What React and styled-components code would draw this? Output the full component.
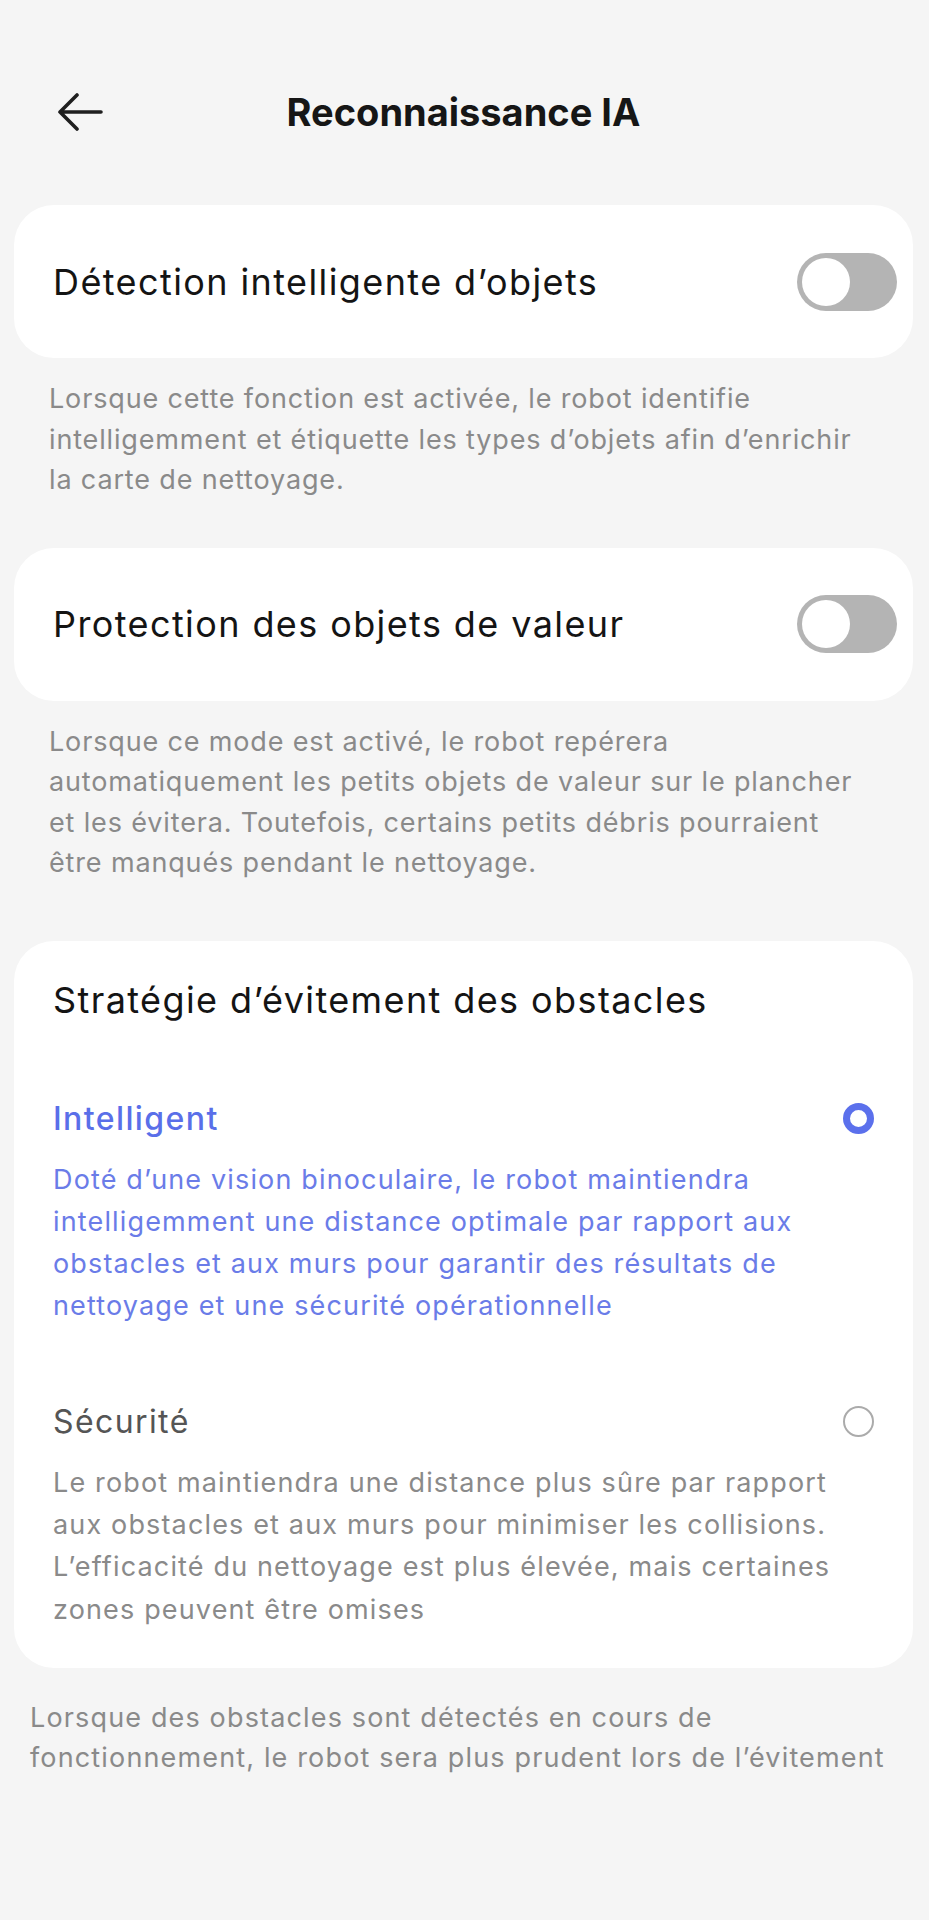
import styled, { createGlobalStyle } from "styled-components";

const GlobalStyle = createGlobalStyle`
  * { box-sizing: border-box; }
  body {
    margin: 0;
    background: #f5f5f5;
    font-family: "Inter", "Noto Sans", sans-serif;
  }
`;

function BackArrow() {
  return (
    <svg width="48" height="38" viewBox="0 0 48 38" fill="none">
      <path
        d="M4 19 H45 M21 2 L4 19 L21 36"
        stroke="#1f1f1f"
        strokeWidth="3.6"
        strokeLinecap="round"
        strokeLinejoin="round"
      />
    </svg>
  );
}

export default function App() {
  return (
    <Page>
      <GlobalStyle />
      <Header>
        <BackButton>
          <BackArrow />
        </BackButton>
        <Title>Reconnaissance IA</Title>
      </Header>

      <SwitchCard>
        <CardLabel>Détection intelligente d’objets</CardLabel>
        <Toggle />
      </SwitchCard>
      <Note>
        Lorsque cette fonction est activée, le robot identifie intelligemment et
        étiquette les types d’objets afin d’enrichir la carte de nettoyage.
      </Note>

      <SwitchCard>
        <CardLabel>Protection des objets de valeur</CardLabel>
        <Toggle />
      </SwitchCard>
      <Note $bottom={57}>
        Lorsque ce mode est activé, le robot repérera automatiquement les petits
        objets de valeur sur le plancher et les évitera. Toutefois, certains
        petits débris pourraient être manqués pendant le nettoyage.
      </Note>

      <StrategyCard>
        <CardLabel>Stratégie d’évitement des obstacles</CardLabel>
        <Option $first>
          <OptionRow>
            <OptionName $active>Intelligent</OptionName>
            <Radio $checked />
          </OptionRow>
          <OptionText $active>
            Doté d’une vision binoculaire, le robot maintiendra intelligemment
            une distance optimale par rapport aux obstacles et aux murs pour
            garantir des résultats de nettoyage et une sécurité opérationnelle
          </OptionText>
        </Option>
        <Option>
          <OptionRow>
            <OptionName>Sécurité</OptionName>
            <Radio />
          </OptionRow>
          <OptionText>
            Le robot maintiendra une distance plus sûre par rapport aux obstacles
            et aux murs pour minimiser les collisions. L’efficacité du nettoyage
            est plus élevée, mais certaines zones peuvent être omises
          </OptionText>
        </Option>
      </StrategyCard>

      <Footer>
        Lorsque des obstacles sont détectés en cours de fonctionnement, le robot
        sera plus prudent lors de l’évitement
      </Footer>
    </Page>
  );
}

const Page = styled.div`
  width: 929px;
  min-height: 1920px;
  padding: 80px 16px 0 14px;
  background: #f5f5f5;
`;

const Header = styled.div`
  position: relative;
  height: 64px;
  display: flex;
  align-items: center;
  justify-content: center;
  margin-bottom: 61px;
`;

const BackButton = styled.div`
  position: absolute;
  left: 42px;
  top: 13px;
  display: flex;
`;

const Title = styled.h1`
  margin: 0;
  font-size: 38px;
  font-weight: 700;
  color: #161616;
  letter-spacing: 0;
`;

const SwitchCard = styled.div`
  height: 153px;
  background: #fff;
  border-radius: 40px;
  display: flex;
  align-items: center;
  justify-content: space-between;
  padding: 0 16px 0 39px;
`;

const CardLabel = styled.div`
  font-size: 36px;
  line-height: 48px;
  color: #141414;
  letter-spacing: 1.4px;
`;

const Toggle = styled.div`
  position: relative;
  width: 100px;
  height: 58px;
  border-radius: 29px;
  background: #b4b4b4;

  &::after {
    content: "";
    position: absolute;
    left: 5px;
    top: 5px;
    width: 48px;
    height: 48px;
    border-radius: 50%;
    background: #fff;
  }
`;

const Note = styled.p`
  margin: 0;
  padding: 21px 35px ${(p) => p.$bottom || 47}px;
  font-size: 27px;
  line-height: 40.5px;
  color: #8a8a8a;
  letter-spacing: 0.85px;
`;

const StrategyCard = styled.div`
  background: #fff;
  border-radius: 40px;
  padding: 35px 39px 37px;
`;

const Option = styled.div`
  margin-top: ${(p) => (p.$first ? 73 : 72)}px;
`;

const OptionRow = styled.div`
  display: flex;
  align-items: center;
  justify-content: space-between;
  height: 44px;
`;

const OptionName = styled.div`
  font-size: 32px;
  font-weight: ${(p) => (p.$active ? 500 : 400)};
  color: ${(p) => (p.$active ? "#5a6fe9" : "#555")};
  letter-spacing: 1.4px;
`;

const Radio = styled.div`
  width: 31px;
  height: 31px;
  border-radius: 50%;
  border: ${(p) => (p.$checked ? "7.5px solid #5b70ec" : "2.5px solid #ababab")};
  background: #fff;
`;

const OptionText = styled.p`
  margin: 18px 0 0;
  font-size: 27px;
  line-height: 42.3px;
  color: ${(p) => (p.$active ? "#6a7ce8" : "#8a8a8a")};
  letter-spacing: 1.15px;
`;

const Footer = styled.p`
  margin: 0;
  padding: 30px 14px 0 16px;
  font-size: 27px;
  line-height: 40.5px;
  color: #8a8a8a;
  letter-spacing: 1.15px;
`;
